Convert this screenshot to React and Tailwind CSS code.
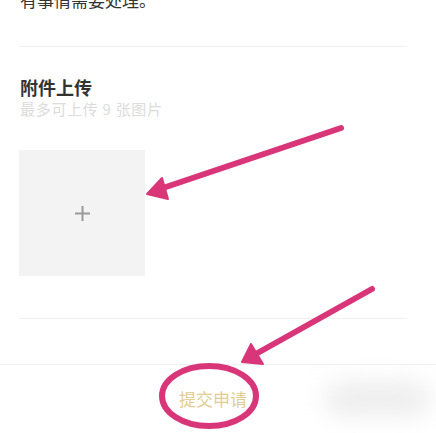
import React from 'react';

export default function App() {
  return (
    <div className="relative w-[436px] h-[433px] overflow-hidden bg-white font-['Noto_Sans_CJK_SC',sans-serif]">
      {/* Description tail */}
      <div className="ml-[18px] w-[389px] border-b border-[#f0f0f0] pb-[34px]">
        <p className="-mt-[12px] pl-[2px] text-[17px] leading-[24px] text-[#333]">有事情需要处理。</p>
      </div>

      {/* Attachments */}
      <div className="ml-[18px] w-[389px] border-b border-[#f0f0f0] pb-[42px]">
        <h3 className="mt-[28px] pl-[2px] text-[18px] font-bold leading-[24px] text-[#333]">附件上传</h3>
        <p className="pl-[2px] text-[15px] tracking-[0.7px] leading-[20px] text-[#dcdcdc]">最多可上传 9 张图片</p>
        <div className="mt-[31px] ml-[1px] w-[126px] h-[126px] bg-[#f3f3f3] flex items-center justify-center">
          <svg width="17" height="17" viewBox="0 0 17 17">
            <path d="M8.5 1v15M1 8.5h15" stroke="#9a9a9a" strokeWidth="2" />
          </svg>
        </div>
      </div>

      {/* Footer */}
      <div className="mt-[45px] h-[69px] border-t border-[#f0f0f0] flex items-center justify-center pr-[10px]">
        <span className="text-[17px] leading-[24px] text-[#e2cd92]">提交申请</span>
      </div>

      {/* blurred smudge */}
      <div className="absolute left-[325px] top-[383px] w-[105px] h-[32px] rounded-full bg-[#ececec] blur-md" />

      {/* annotations */}
      <svg className="absolute inset-0 pointer-events-none" width="436" height="433" viewBox="0 0 436 433">
        <g fill="#d9367a" stroke="#d9367a" strokeLinecap="round" strokeLinejoin="round">
          <line x1="341" y1="128" x2="160" y2="189" strokeWidth="6" />
          <polygon points="147,194 162,178 168,199" strokeWidth="2" />
          <line x1="372" y1="289" x2="254" y2="355" strokeWidth="6" />
          <polygon points="242,362 251,344 263,364" strokeWidth="2" />
        </g>
        <ellipse cx="209" cy="396" rx="47" ry="30" fill="none" stroke="#d9367a" strokeWidth="6" />
      </svg>
    </div>
  );
}
